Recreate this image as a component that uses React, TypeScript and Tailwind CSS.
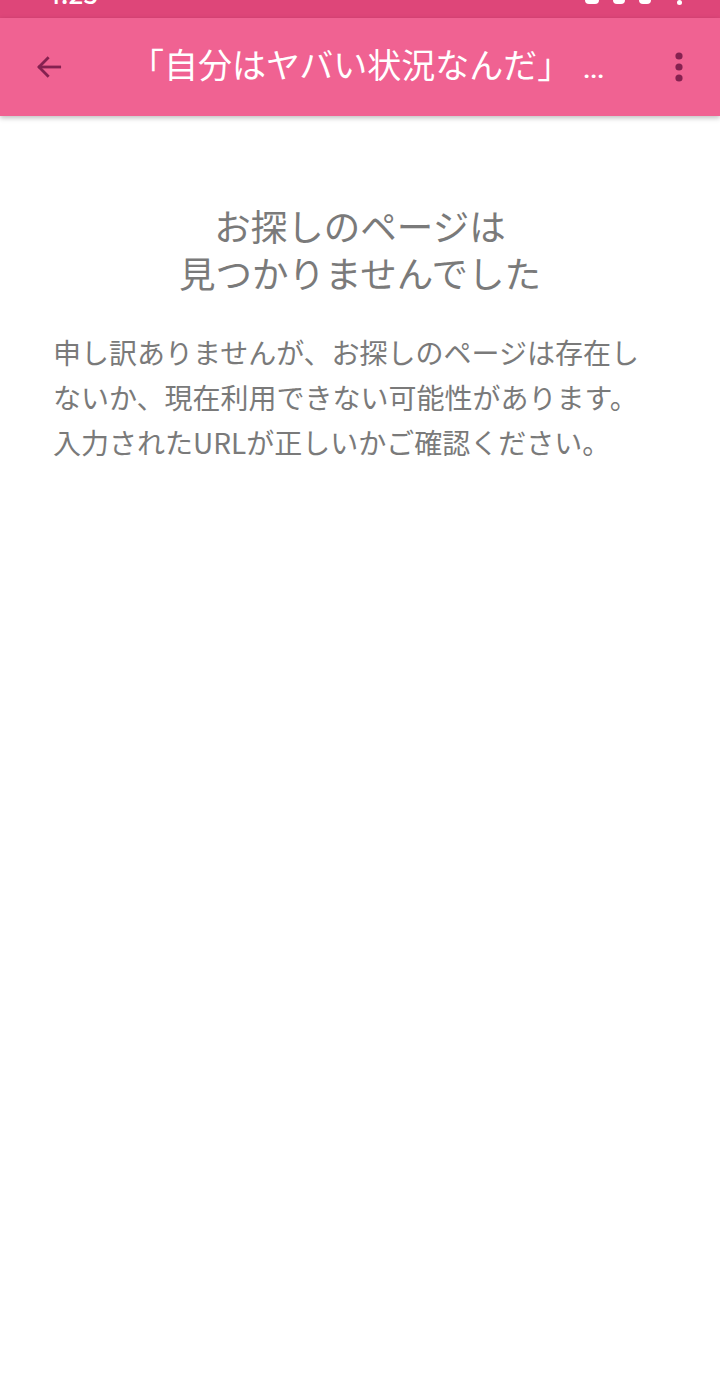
import React from 'react';

const FONT = { fontFamily: '"Noto Sans CJK JP", "Noto Sans", Roboto, sans-serif' };

export default function App() {
  return (
    <div className="min-h-[1394px] w-[720px] bg-white" style={FONT}>
      {/* Status bar (cut off at top) */}
      <div className="relative h-[18px] overflow-hidden bg-[#de4679]">
        <span className="absolute left-[46px] top-[-20px] text-[26px] font-medium leading-none text-white">4:25</span>
        <div className="absolute right-[38px] top-0 flex items-start gap-[14px]">
          <div className="h-[4px] w-[14px] rounded-b-full bg-white" />
          <div className="h-[4px] w-[12px] rounded-b-full bg-white" />
          <div className="h-[4px] w-[12px] rounded-b-full bg-white" />
          <div className="ml-[12px] h-[5px] w-[5px] rounded-full bg-white" />
        </div>
      </div>

      {/* App bar */}
      <div className="relative z-10 flex h-[98px] items-center bg-[#f06292] shadow-[0_2px_5px_rgba(0,0,0,0.25)]">
        <button className="flex h-[98px] w-[98px] shrink-0 items-center justify-center">
          <svg width="32" height="32" viewBox="0 0 24 24" fill="none" stroke="#852150" strokeWidth="2.1" strokeLinecap="square">
            <path d="M20 12H5" />
            <path d="M11 5.5L4.5 12L11 18.5" />
          </svg>
        </button>
        <div className="flex min-w-0 flex-1 items-baseline whitespace-nowrap pl-[32px]">
          <span className="text-[34px] leading-[48px] text-white">「自分はヤバい状況なんだ」</span>
          <span className="ml-[12px] text-[24px] font-bold leading-[48px] text-white" style={{ fontFamily: 'Roboto, sans-serif' }}>...</span>
        </div>
        <button className="flex h-[98px] w-[82px] shrink-0 items-center justify-center">
          <svg width="10" height="32" viewBox="0 0 10 32" fill="#852150">
            <circle cx="5" cy="5" r="3.6" />
            <circle cx="5" cy="16" r="3.6" />
            <circle cx="5" cy="27" r="3.6" />
          </svg>
        </button>
      </div>

      {/* Content */}
      <div className="px-[53px] pt-[86px]">
        <h1 className="text-center text-[36.5px] font-normal leading-[47px] text-[#7a7a7a]">
          <div>お探しのページは</div>
          <div>見つかりませんでした</div>
        </h1>
        <p className="mt-[34px] text-[28px] leading-[45px] text-[#7a7a7a]">
          申し訳ありませんが、お探しのページは存在しないか、現在利用できない可能性があります。
          <br />
          入力されたURLが正しいかご確認ください。
        </p>
      </div>
    </div>
  );
}
